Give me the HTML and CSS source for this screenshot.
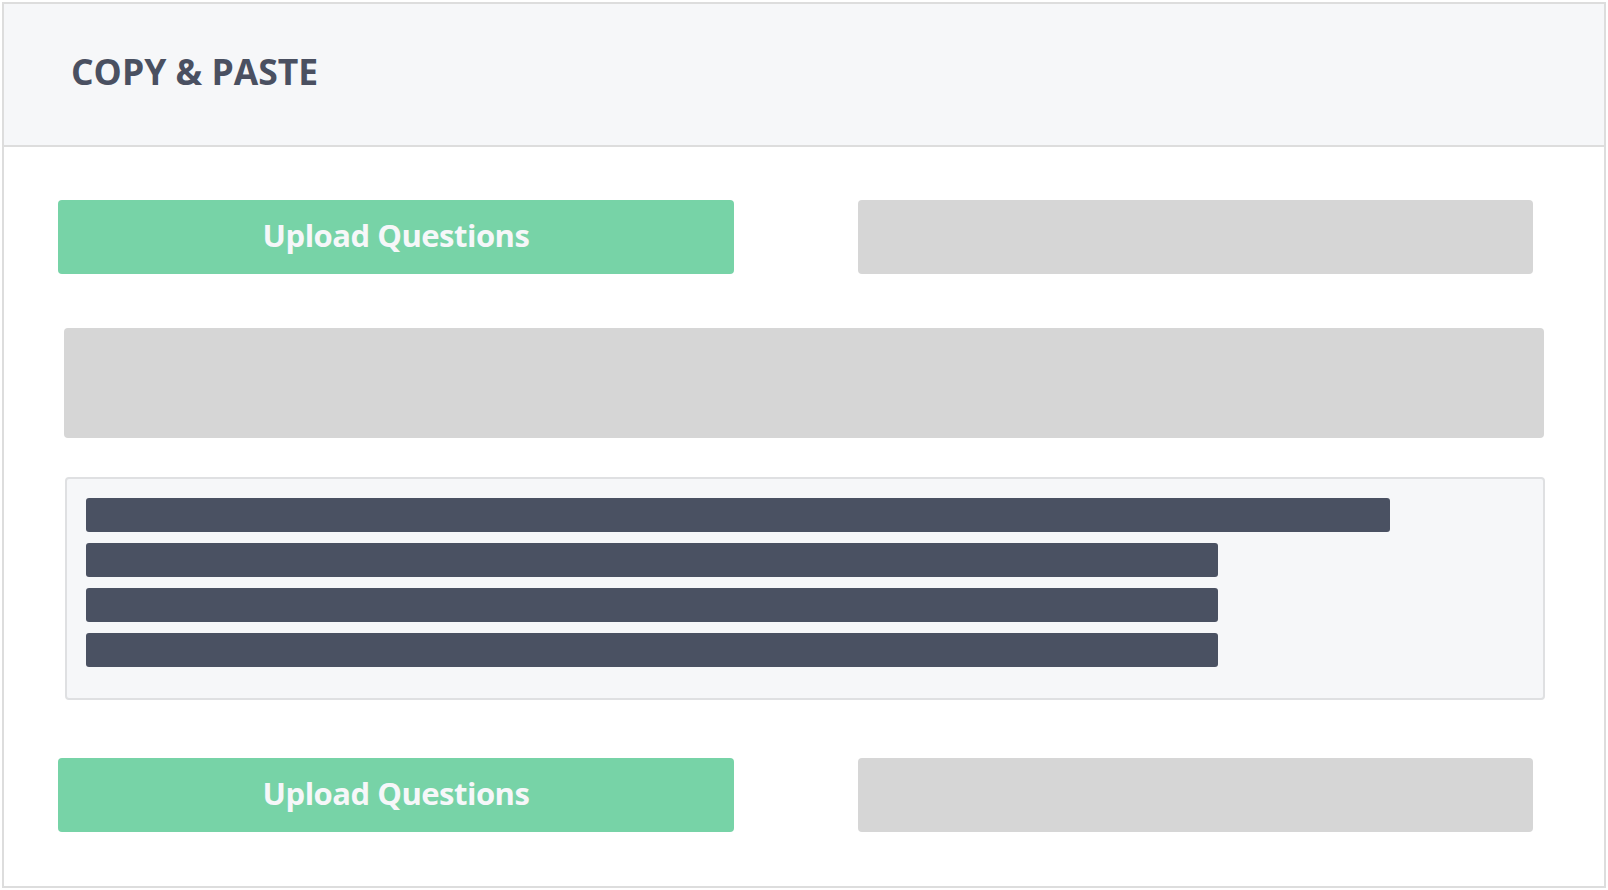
FILE: index.html
```html
<!DOCTYPE html>
<html lang="en">
<head>
<meta charset="utf-8">
<title>Copy &amp; Paste</title>
<link rel="stylesheet" href="styles.css">
</head>
<body>
<div class="card">
  <header class="card-header">
    <h1 class="title">COPY &amp; PASTE</h1>
  </header>
  <div class="card-body">
    <div class="btn-row">
      <button class="btn btn-green">Upload Questions</button>
      <div class="btn btn-grey"></div>
    </div>
    <div class="block-grey"></div>
    <div class="paste-box">
      <div class="line line-long"></div>
      <div class="line line-short"></div>
      <div class="line line-short"></div>
      <div class="line line-short"></div>
    </div>
    <div class="btn-row btn-row-bottom">
      <button class="btn btn-green">Upload Questions</button>
      <div class="btn btn-grey"></div>
    </div>
  </div>
</div>
</body>
</html>
```
FILE: styles.css
```css
* { box-sizing: border-box; }
html, body { background: #ffffff; }
body {
  margin: 2px;
  font-family: "Open Sans", "Lato", "Liberation Sans", sans-serif;
}
.card {
  width: 1604px;
  height: 886px;
  border: 2px solid #dddddd;
  background: #ffffff;
  display: flex;
  flex-direction: column;
}
.card-header {
  height: 143px;
  background: #f6f7f9;
  border-bottom: 2px solid #dddddd;
  display: flex;
  align-items: center;
  padding: 0 0 7px 67px;
}
.title {
  margin: 0;
  font-size: 35.5px;
  font-weight: 700;
  color: #4a5061;
}
.card-body {
  padding: 53px 60px 0 60px;
  display: flex;
  flex-direction: column;
}
.btn-row {
  display: flex;
  gap: 124px;
  margin-left: -6px;
}
.btn {
  width: 676px;
  height: 74px;
  border-radius: 4px;
  border: none;
}
.btn-green {
  background: #77d3a7;
  color: #f6f7f9;
  font-family: "Open Sans", "Lato", "Liberation Sans", sans-serif;
  font-weight: 700;
  font-size: 31px;
  letter-spacing: -0.5px;
  padding: 0 0 4px 0;
}
.btn-grey {
  background: #d6d6d6;
  width: 675px;
}
.block-grey {
  margin-top: 54px;
  height: 110px;
  background: #d6d6d6;
  border-radius: 4px;
}
.paste-box {
  margin-top: 39px;
  height: 223px;
  margin-left: 1px;
  margin-right: -1px;
  background: #f6f7f9;
  border: 2px solid #dfe0e2;
  border-radius: 4px;
  padding: 19px;
  display: flex;
  flex-direction: column;
  gap: 11px;
}
.line {
  height: 34px;
  background: #4a5162;
  border-radius: 3px;
}
.line-long { width: 1304px; }
.line-short { width: 1132px; }
.btn-row-bottom {
  margin-top: 58px;
}
```
